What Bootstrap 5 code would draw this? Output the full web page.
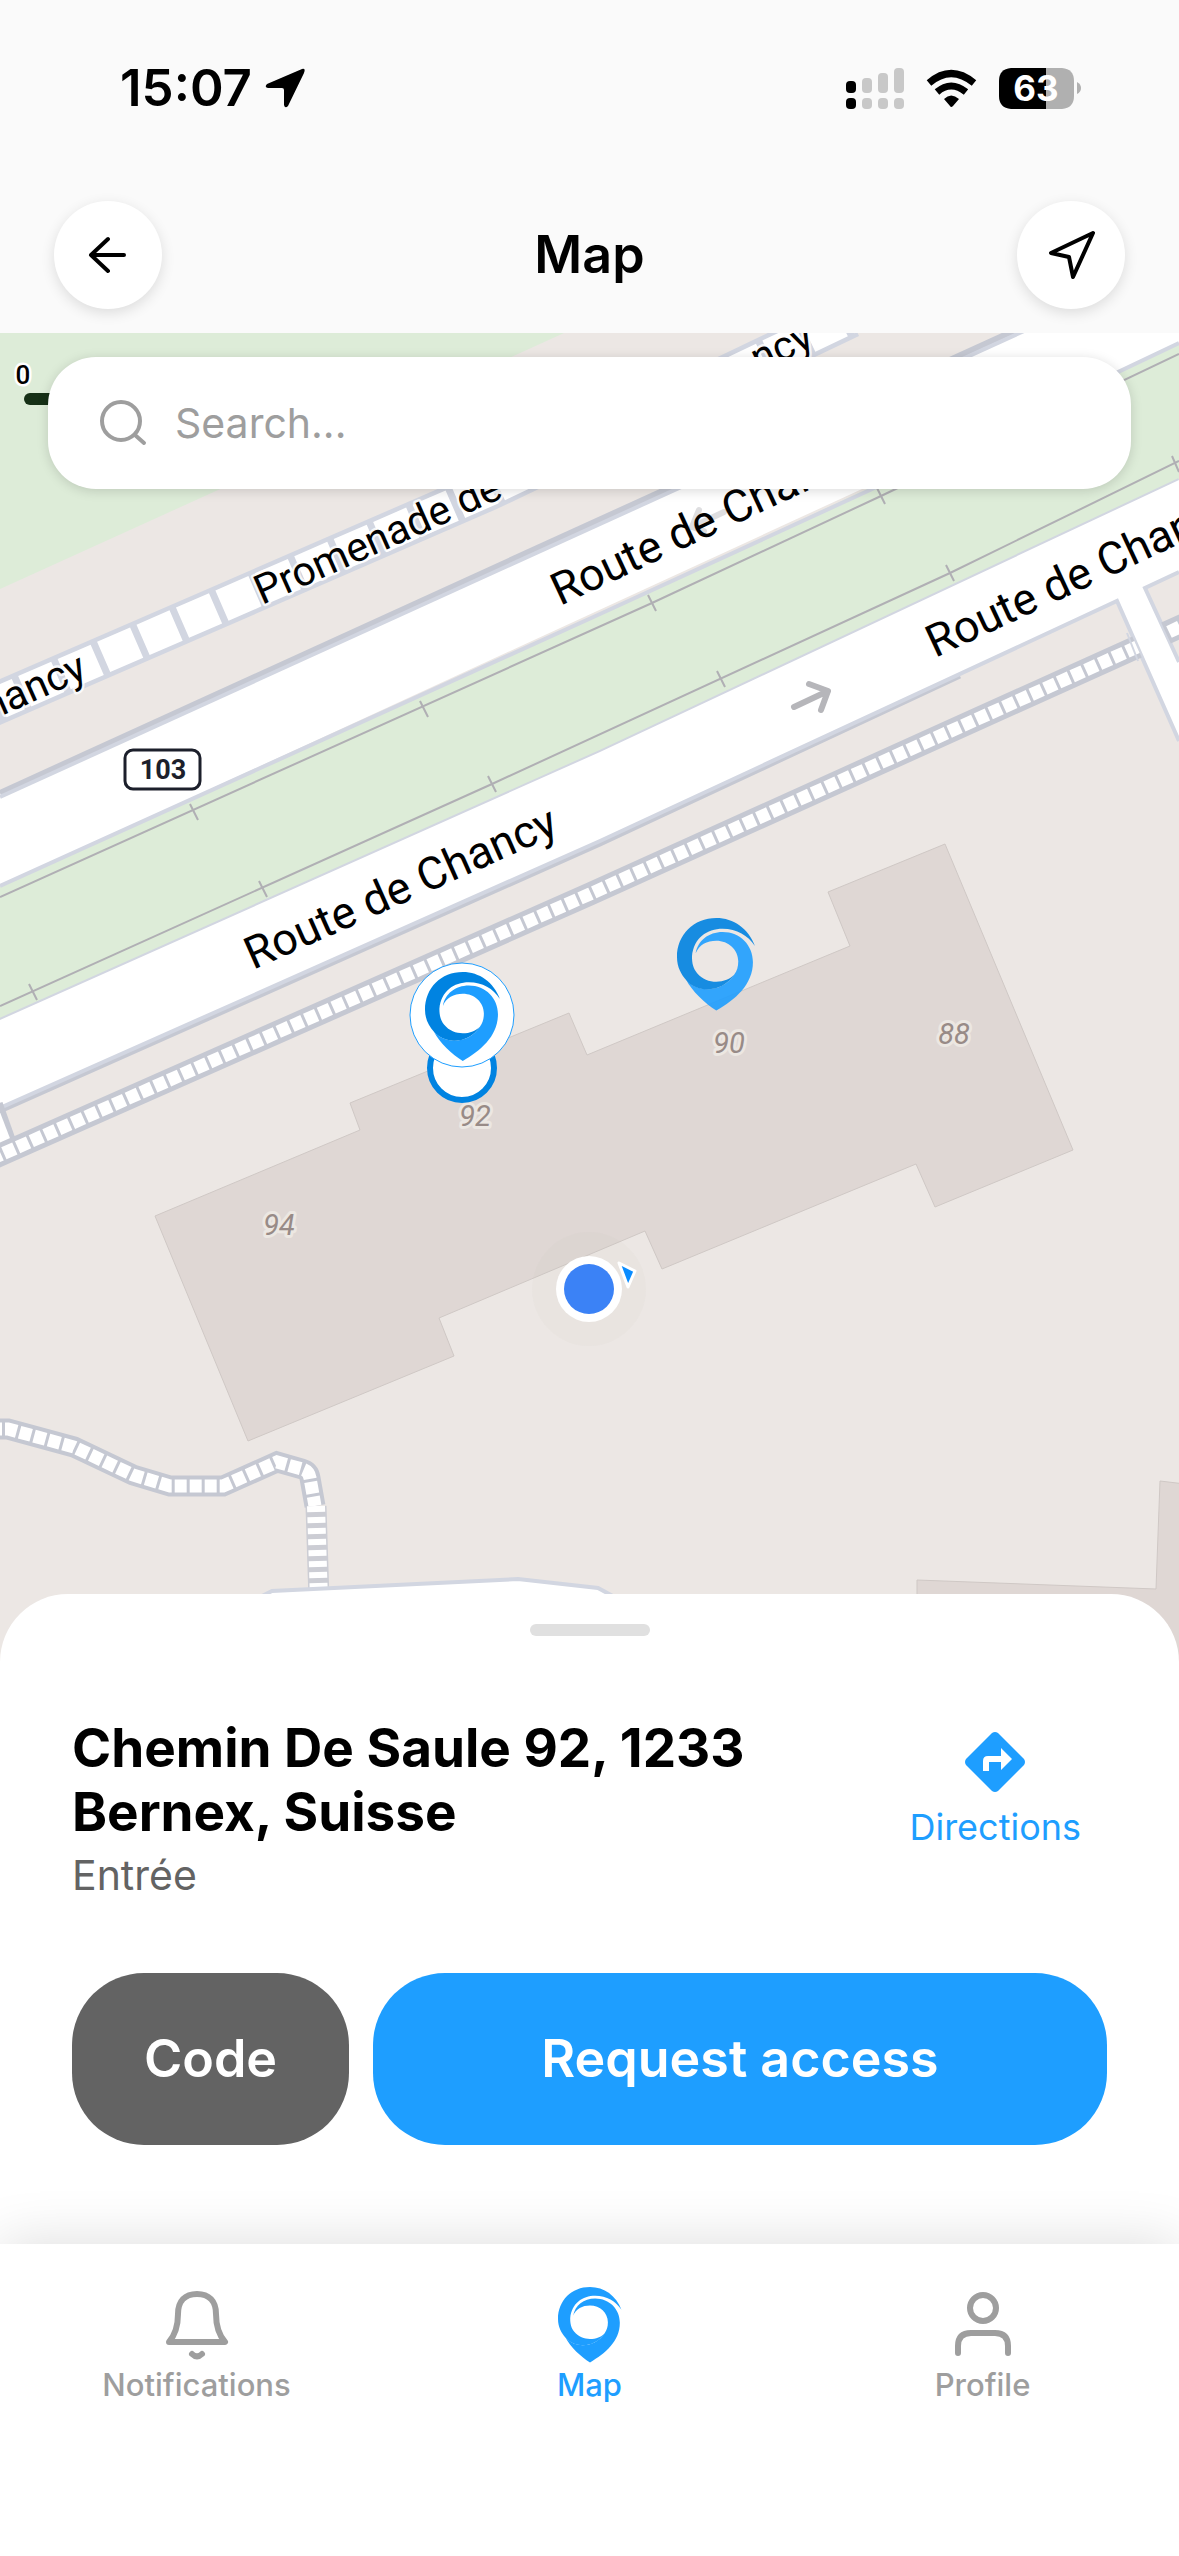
<!DOCTYPE html>
<html lang="en">
<head>
<meta charset="utf-8">
<meta name="viewport" content="width=device-width, initial-scale=1">
<title>Map</title>
<link href="https://cdn.jsdelivr.net/npm/bootstrap@5.3.0/dist/css/bootstrap.min.css" rel="stylesheet">
<style>
  :root { --brand: #1e9eff; --brand-dark: #0083e1; --muted: #9e9e9e; --ink-2: #636363; }
  body { font-family: Inter, "Liberation Sans", sans-serif; background: #fff; color: #000; }
  svg { display: block; }
  .top-area { background: #fafafa; }
  .status-bar { height: 176px; padding: 0 98px 0 120px; }
  .status-time { font-size: 51px; line-height: 60px; font-weight: 600; }
  .status-left { gap: 12px; }
  .battery-text { font-size: 35px; font-weight: 700; }
  .title-bar { height: 157px; padding: 0 54px; }
  .title-bar h1 { font-size: 52px; line-height: 64px; font-weight: 600; }
  .btn-round { width: 108px; height: 108px; border-radius: 50%; background: #fff; box-shadow: 0 4px 14px rgba(0,0,0,.12); }
  .map-area { background: #ece7e4; }
  .map-canvas text { font-family: Roboto, "Liberation Sans", sans-serif; }
  .road-name { font-size: 45px; }
  .path-name { font-size: 41px; stroke: #fff; stroke-width: 5px; stroke-opacity: .8; paint-order: stroke; stroke-linejoin: round; }
  .house-no { font-size: 29px; font-style: italic; fill: #988b87; text-anchor: middle; stroke: #ece7e2; stroke-width: 6px; paint-order: stroke; stroke-linejoin: round; }
  .search-box { position: absolute; top: 24px; left: 48px; right: 48px; height: 132px; padding: 0 48px; border-radius: 48px; background: #fff; box-shadow: 0 2px 12px rgba(0,0,0,.15); }
  .search-box .form-control { font-size: 41px; line-height: 52px; color: #000; padding: 0 0 0 27px; }
  .search-box .form-control::placeholder { color: var(--muted); opacity: 1; }
  .sheet { position: relative; margin-top: -79px; height: 650px; border-radius: 68px 68px 0 0; background: #fff; padding: 30px 72px 0; }
  .grabber { width: 120px; height: 12px; border-radius: 6px; background: #e0e0e0; }
  .place-row { margin-top: 80px; }
  .place-name { font-size: 53px; line-height: 64px; font-weight: 700; }
  .place-note { font-size: 41px; line-height: 62px; color: var(--ink-2); }
  .directions-link { color: var(--brand); font-size: 36px; line-height: 48px; padding: 15px 26px 0 0; gap: 10px; }
  .actions { margin-top: 67px; gap: 24px; }
  .action-btn { height: 172px; border-radius: 72px; font-size: 52px; font-weight: 600; color: #fff; border: 0; }
  .action-btn:hover { color: #fff; }
  .btn-code { background: #636363; width: 277px; }
  .btn-request { background: var(--brand); }
  .tab-bar { position: relative; background: #fff; height: 312px; box-shadow: 0 0 54px rgba(0,0,0,.14); }
  .tab-item { color: var(--muted); font-size: 31px; line-height: 36px; font-weight: 500; padding-top: 41px; gap: 2px; }
  .tab-item.active { color: var(--brand); }
  .tab-icon { height: 80px; }
</style>
</head>
<body>
<svg width="0" height="0" class="position-absolute" aria-hidden="true">
  <defs>
    <path id="pin-back" d="M234 84C215 32 170 0 118 0C50 0 0 50 0 118C0 148 13 170 28 187C62 228 138 224 172 170C150 195 92 204 60 165C48 150 45 135 45 115C50 60 90 32 137 32C180 32 213 52 234 84Z"/>
    <path id="pin-front" d="M56 106C62 68 95 42 137 42C190 42 228 82 228 132C228 200 175 245 118 278C85 258 45 220 27 185C62 228 138 224 172 170C180 160 184 146 184 130C184 95 155 68 118 68C90 68 66 80 56 106Z"/>
  </defs>
</svg>

<header class="top-area">
  <div class="status-bar d-flex align-items-center justify-content-between">
    <div class="status-left d-flex align-items-center">
      <span class="status-time">15:07</span>
      <svg width="42" height="42" viewBox="0 0 42 42" aria-hidden="true"><path d="M38 2Q42 1 40 6L24 39Q21 42 20 38V23Q20 21 18 21H4Q0 20 3 17Z"/></svg>
    </div>
    <div class="d-flex align-items-center">
      <svg width="236" height="42" viewBox="845 66 236 42" role="img" aria-label="Signal, Wi-Fi and battery at 63 percent">
        <g><rect x="846" y="80" width="10" height="12" rx="4"/><rect x="846" y="97" width="10" height="11" rx="4"/></g>
        <g fill="#c8c8c8"><rect x="862" y="77" width="10" height="15" rx="4"/><rect x="878" y="72" width="10" height="20" rx="4"/><rect x="894" y="67" width="10" height="25" rx="4"/><rect x="862" y="97" width="10" height="11" rx="4"/><rect x="878" y="97" width="10" height="11" rx="4"/><rect x="894" y="97" width="10" height="11" rx="4"/></g>
        <g fill="none" stroke="#000" stroke-width="7"><path d="M929 82Q951 63 974 82"/><path d="M937 91Q951 79 966 91"/></g>
        <path d="M944 98Q951 91 959 98L953 105Q951 107 950 105Z"/>
        <path d="M1011 67H1046V108H1011Q999 107 999 95V80Q999 68 1011 67Z"/>
        <path d="M1046 67H1062Q1074 68 1074 80V95Q1074 107 1062 108H1046Z" fill="#b0b0b0"/>
        <path d="M1077 81Q1081 83 1081 87T1077 93Z" fill="#b0b0b0"/>
        <text class="battery-text" x="1036" y="100" text-anchor="middle" fill="#fff">63</text>
      </svg>
    </div>
  </div>
  <div class="title-bar d-flex align-items-center justify-content-between">
    <button type="button" class="btn btn-round p-0 border-0 d-flex align-items-center justify-content-center" aria-label="Back">
      <svg width="40" height="40" viewBox="0 0 40 40" fill="none" stroke="#000" stroke-width="4" stroke-linecap="round" stroke-linejoin="round"><path d="M36 20H3M20 4L3 20L20 36"/></svg>
    </button>
    <h1 class="m-0">Map</h1>
    <button type="button" class="btn btn-round p-0 border-0 d-flex align-items-center justify-content-center" aria-label="Locate me">
      <svg width="48" height="48" viewBox="0 0 48 48" fill="none" stroke="#000" stroke-width="4" stroke-linecap="round" stroke-linejoin="round"><path d="M46 2L4 22L22 26L26 46Z"/></svg>
    </button>
  </div>
</header>

<main>
  <section class="map-area position-relative overflow-hidden" aria-label="Map">
    <svg class="map-canvas w-100 h-auto" viewBox="0 333 1179 1340" width="1179" height="1340">
      <rect y="333" width="1179" height="1340" fill="#ece7e4"/>
      <path d="M0 333H564L0 589Z" fill="#ddecd8"/>
      <!-- promenade -->
      <g fill="none">
        <path d="M-20 711L0 702L488 490L850 317" stroke="#d2d6e1" stroke-width="42"/>
        <path d="M0 702L488 490L850 317" stroke="#fff" stroke-width="33" stroke-dasharray="36 7" stroke-dashoffset="16"/>
      </g>
      <!-- upper carriageway -->
      <path d="M0 794L1012 333H1179V343L0 886Z" fill="#fff"/>
      <path d="M0 793L1020 328" stroke="#c5c8d2" stroke-width="6"/>
      <path d="M0 797L1024 331" stroke="#d2d6e1" stroke-width="4"/>
      <!-- median -->
      <path d="M0 886L600 614L1179 343V480L600 752L0 1020Z" fill="#ddecd8"/>
      <path d="M0 886L600 614L870 490L1179 343M0 1020L600 752L1179 480" fill="none" stroke="#d2d6e1" stroke-width="4"/>
      <g fill="none" stroke="#b0afb4" stroke-width="2">
        <path d="M0 897L652 603L881 496L1179 354M0 1006L492 784L950 573L1179 461"/>
        <path d="M190 804L198 820M420 701L428 717M648 595L656 611M877 488L885 504M29 984L37 1000M259 881L267 897M488 776L496 792M717 671L725 687M946 565L954 581M1172 456L1179 472"/>
      </g>
      <!-- lower carriageway and side road -->
      <path d="M0 1020L600 752L1179 480V572L1145 587L1179 660V740L1117 601L600 842L0 1109Z" fill="#fff"/>
      <path d="M0 1111L600 844L960 676" fill="none" stroke="#c5c8d2" stroke-width="5"/>
      <path d="M0 1108L600 841L1117 601L1179 741M1179 572L1145 588L1179 662" fill="none" stroke="#d2d6e1" stroke-width="4"/>
      <!-- footways -->
      <g fill="none">
        <path d="M-6 1105L10 1150" stroke="#c5c8d2" stroke-width="18"/>
        <path d="M-8 1108L8 1150" stroke="#fff" stroke-width="12"/>
        <path d="M-10 1159L0 1155L590 894L880 763L1137 647M1166 633L1190 622" stroke="#c5c8d2" stroke-width="23"/>
        <path d="M-10 1159L0 1155L590 894L880 763L1137 647M1169 632L1190 622" stroke="#fff" stroke-width="13" stroke-dasharray="12 3"/>
        <path d="M1138 661L1127 633" stroke="#d2d6e1" stroke-width="2"/>
        <path d="M-10 1429H8L74 1447L133 1475L170 1486H223L277 1462L302 1469Q309 1471 310 1478L315 1506" stroke="#c5c8d2" stroke-width="21"/>
        <path d="M-10 1429H8L74 1447L133 1475L170 1486H223L277 1462L302 1469Q309 1471 310 1478L315 1506" stroke="#fff" stroke-width="13" stroke-dasharray="12 3"/>
        <path d="M316 1506L319 1600" stroke="#cccdd4" stroke-width="21"/>
        <path d="M316 1506L319 1600" stroke="#fff" stroke-width="18" stroke-dasharray="6 5"/>
      </g>
      <path d="M262 1596L272 1591L518 1579L598 1588L620 1600V1640H262Z" fill="#fff" stroke="#d2d6e1" stroke-width="4"/>
      <!-- buildings -->
      <g fill="#dfd7d4" stroke="#cfc8c5" stroke-width="1">
        <path d="M945 844L828 892L850 946L587 1055L569 1013L350 1103L360 1130L155 1216L248 1441L454 1356L439 1318L645 1231L662 1269L916 1164L935 1207L1073 1150Z"/>
        <path d="M917 1680V1580L1156 1589L1160 1481L1185 1484V1680Z"/>
      </g>
      <!-- one-way arrows -->
      <g fill="none" stroke="#b6b6ba" stroke-width="6" stroke-linecap="round" stroke-linejoin="round">
        <path d="M794 707L828 691M809 684L828 691L821 710"/>
        <path d="M724 512L692 527M699 510L692 527L704 531" stroke-opacity=".45"/>
      </g>
      <!-- labels -->
      <text class="path-name" text-anchor="end" transform="translate(89 677) rotate(-24)">hancy</text>
      <text class="path-name" transform="translate(262 605) rotate(-24)">Promenade de</text>
      <text class="path-name" text-anchor="end" transform="translate(816 346) rotate(-25)">ncy</text>
      <text class="road-name" transform="translate(253 970) rotate(-24)">Route de Chancy</text>
      <text class="road-name" transform="translate(560 606) rotate(-25)">Route de Chancy</text>
      <text class="road-name" transform="translate(935 658) rotate(-25)">Route de Chancy</text>
      <rect x="125" y="750" width="75" height="39" rx="8" fill="#fff" stroke="#1c1f2b" stroke-width="3"/>
      <text x="163" y="779" font-size="27" font-weight="700" fill="#1c1f2b" text-anchor="middle">103</text>
      <text class="house-no" x="279" y="1235">94</text>
      <text class="house-no" x="475" y="1126">92</text>
      <text class="house-no" x="729" y="1053">90</text>
      <text class="house-no" x="954" y="1044">88</text>
      <!-- scale -->
      <text x="23" y="384" font-size="26" font-weight="500" text-anchor="middle" stroke="#fff" stroke-width="5" paint-order="stroke">0</text>
      <rect x="24" y="393" width="120" height="12" rx="6" fill="#163016"/>
      <!-- place pins -->
      <g transform="translate(677 918) scale(.333)" opacity=".9"><use href="#pin-front" fill="#1e9eff"/><use href="#pin-back" fill="#0083e1"/></g>
      <circle cx="462" cy="1068" r="32" fill="#fff" stroke="#0083e1" stroke-width="6"/>
      <circle cx="462" cy="1015" r="52" fill="#fff" stroke="#1e9eff" stroke-width="1"/>
      <g transform="translate(425 972) scale(.32)"><use href="#pin-front" fill="#1e9eff"/><use href="#pin-back" fill="#0083e1"/></g>
      <!-- current position -->
      <circle cx="589" cy="1289" r="57" fill="#b4c0a4" fill-opacity=".06"/>
      <circle cx="589" cy="1289" r="33" fill="#fff"/>
      <circle cx="589" cy="1289" r="25" fill="#3b82f6"/>
      <path d="M619 1263L635 1271L628 1287Z" fill="#0a8cff" stroke="#fff" stroke-width="3" stroke-linejoin="round"/>
    </svg>
    <div class="search-box d-flex align-items-center">
      <svg class="flex-shrink-0" width="52" height="52" viewBox="0 0 52 52" fill="none" stroke="#9e9e9e" stroke-width="4" stroke-linecap="round" aria-hidden="true"><circle cx="25" cy="24" r="19"/><path d="M39 38L48 46"/></svg>
      <label for="map-search" class="visually-hidden">Search</label>
      <input id="map-search" type="text" class="form-control border-0 bg-transparent shadow-none" placeholder="Search...">
    </div>
  </section>

  <section class="sheet" aria-label="Selected place">
    <div class="grabber mx-auto"></div>
    <div class="place-row d-flex justify-content-between align-items-start">
      <div class="flex-grow-1">
        <h2 class="place-name m-0">Chemin De Saule 92, 1233<br>Bernex, Suisse</h2>
        <p class="place-note m-0">Entrée</p>
      </div>
      <a href="#directions" class="directions-link text-decoration-none d-flex flex-column align-items-center">
        <svg width="62" height="62" viewBox="0 0 62 62" aria-hidden="true"><path d="M28 2Q31 0 34 2L60 28Q62 31 60 34L34 60Q31 62 28 60L2 34Q0 31 2 28Z" fill="#1e9eff"/><path d="M19 40V30Q19 25 24 25H37V17L48 28L37 39V31H25V40Z" fill="#fff"/></svg>
        <span>Directions</span>
      </a>
    </div>
    <div class="actions d-flex">
      <button type="button" class="btn action-btn btn-code flex-shrink-0">Code</button>
      <button type="button" class="btn action-btn btn-request flex-grow-1">Request access</button>
    </div>
  </section>
</main>

<nav class="tab-bar row g-0" aria-label="Main">
  <a href="#notifications" class="tab-item col-4 d-flex flex-column align-items-center text-decoration-none">
    <span class="tab-icon d-flex align-items-center">
      <svg width="72" height="74" viewBox="0 0 72 74" fill="none" stroke="#9e9e9e" stroke-width="6" stroke-linecap="round" stroke-linejoin="round" aria-hidden="true"><path d="M17 26C17 13 24 6 36 6S55 13 55 26C55 39 58 47 64 54H8C14 47 17 39 17 26Z"/><path d="M31 66Q36 71 41 66"/></svg>
    </span>
    <span>Notifications</span>
  </a>
  <a href="#map" class="tab-item active col-4 d-flex flex-column align-items-center text-decoration-none" aria-current="page">
    <span class="tab-icon d-flex align-items-center">
      <svg width="64" height="76" viewBox="0 0 236 280" fill="#1e9eff" aria-hidden="true"><use href="#pin-front"/><use href="#pin-back"/></svg>
    </span>
    <span>Map</span>
  </a>
  <a href="#profile" class="tab-item col-4 d-flex flex-column align-items-center text-decoration-none">
    <span class="tab-icon d-flex align-items-center">
      <svg width="64" height="70" viewBox="0 0 64 70" fill="none" stroke="#9e9e9e" stroke-width="6" stroke-linecap="round" aria-hidden="true"><circle cx="32" cy="18" r="13"/><path d="M7 63V56Q7 43 20 43H44Q57 43 57 56V63"/></svg>
    </span>
    <span>Profile</span>
  </a>
</nav>
<script src="https://cdn.jsdelivr.net/npm/bootstrap@5.3.0/dist/js/bootstrap.bundle.min.js"></script>
</body>
</html>
